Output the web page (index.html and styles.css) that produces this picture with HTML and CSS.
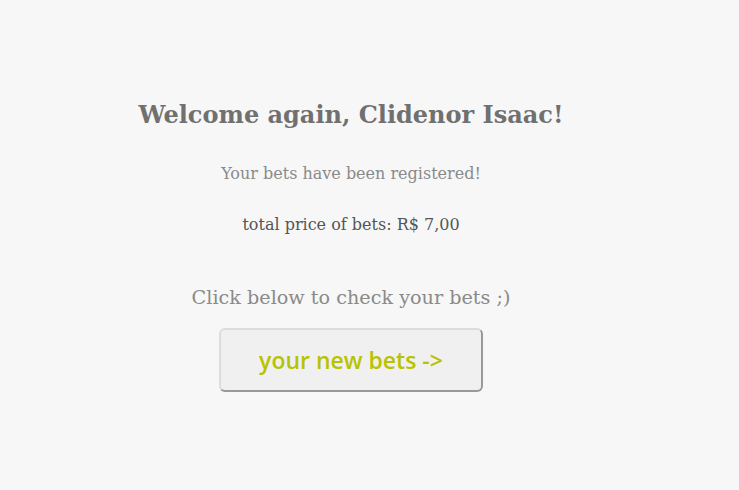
FILE: index.html
```html
<!DOCTYPE html>
<html>
<head>
<meta charset="utf-8">
<link rel="stylesheet" href="styles.css">
</head>
<body>
<main class="page">
  <h1 class="title">Welcome again, Clidenor Isaac!</h1>
  <p class="note">Your bets have been registered!</p>
  <p class="total">total price of bets: R$ 7,00</p>
  <p class="hint">Click below to check your bets ;)</p>
  <button class="btn">your new bets -&gt;</button>
</main>
</body>
</html>
```
FILE: styles.css
```css
html, body {
  margin: 0;
  padding: 0;
  background: #f7f7f7;
  height: 100%;
}
.page {
  width: 702px;
  display: flex;
  flex-direction: column;
  align-items: center;
  padding-top: 99px;
  font-family: "DejaVu Serif", serif;
}
.title {
  margin: 0;
  font-size: 24px;
  font-weight: bold;
  color: #707070;
  line-height: 32px;
}
.note {
  margin: 33px 0 0;
  font-size: 16px;
  color: #8a8a8a;
  line-height: 20px;
}
.total {
  margin: 31px 0 0;
  font-size: 16px;
  color: #555;
  line-height: 20px;
}
.hint {
  margin: 51px 0 0;
  font-size: 19.2px;
  color: #8a8a8a;
  line-height: 24px;
}
.btn {
  margin-top: 18px;
  width: 264px;
  height: 64px;
  background: #f0f0f0;
  border: 2px solid #dcdcdc;
  border-right-color: #999;
  border-bottom-color: #999;
  border-radius: 6px;
  font-family: "Open Sans", sans-serif;
  font-size: 23px;
  font-weight: 600;
  color: #b7c300;
  padding: 0;
}
```
